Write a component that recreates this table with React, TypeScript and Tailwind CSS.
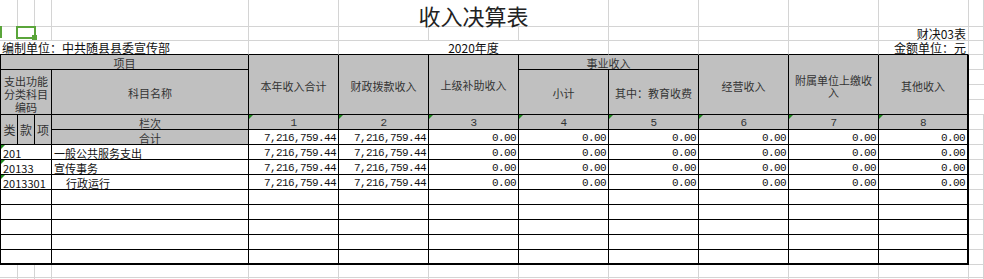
import React from "react";

// sheet column template: 类 | 款 | 项 | 科目名称 | 8 value columns | rest
const COLS = "grid grid-cols-[18px_17px_17px_197px_repeat(8,90px)_1fr]";

const OUT = "border-r border-b border-[#d4d4d4]";
const IN = "border-r border-b border-black";
const IN_LAST = "border-r-2 border-b border-black"; // right edge of the table
const HEAD = "bg-[#c0c0c0] text-[#333]";
const NUM = "font-['Liberation_Mono',monospace] text-[11px] tracking-[-0.6px]";

const values = [
  "7,216,759.44",
  "7,216,759.44",
  "0.00",
  "0.00",
  "0.00",
  "0.00",
  "0.00",
  "0.00",
];

const dataRows = [
  { code: "201", name: "一般公共服务支出", indent: false },
  { code: "20133", name: "宣传事务", indent: false },
  { code: "2013301", name: "行政运行", indent: true },
];

const Mark = () => (
  <span className="absolute left-0 top-0 h-0 w-0 border-t-4 border-r-4 border-t-[#1f8a1f] border-r-transparent" />
);

const Cell = ({
  className = "",
  children,
}: {
  className?: string;
  children?: React.ReactNode;
}) => <div className={`relative flex min-w-0 ${className}`}>{children}</div>;

const ValueCells = ({ empty, last }: { empty?: boolean; last?: boolean }) => (
  <>
    {values.map((v, i) => (
      <Cell
        key={i}
        className={`${i === 7 ? IN_LAST : IN} ${last ? "border-b-2" : ""} items-end justify-end pr-[2px] ${NUM} leading-[11px] text-[#111]`}
      >
        {empty ? null : v}
      </Cell>
    ))}
  </>
);

const App = () => {
  return (
    <div className="h-[279px] w-[984px] overflow-hidden bg-white font-['Noto_Sans_CJK_SC',sans-serif] text-[11px] text-[#111]">
      {/* sheet title area */}
      <div className={`${COLS} grid-rows-[27px_14px_14px]`}>
        <Cell className={OUT} />
        <Cell className={OUT} />
        <Cell className={OUT} />
        <Cell className={OUT} />
        <Cell className={OUT} />
        <Cell className={`${OUT} col-span-3 items-end justify-center text-[22px] leading-[22px] text-[#222]`}>
          收入决算表
        </Cell>
        <Cell className={OUT} />
        <Cell className={OUT} />
        <Cell className={OUT} />
        <Cell className={OUT} />
        <Cell className={OUT} />

        <Cell className={OUT}>
          <span className="absolute left-0 top-[-1px] h-[12px] w-[2px] bg-[#5aa53a]" />
        </Cell>
        <Cell className={OUT}>
          <span className="absolute left-[-2px] top-[-1px] z-10 h-[13px] w-[20px] border-2 border-[#5aa53a]" />
          <span className="absolute left-[14px] top-[8px] z-10 h-[5px] w-[5px] bg-[#5aa53a]" />
        </Cell>
        <Cell className={OUT} />
        <Cell className={OUT} />
        <Cell className={OUT} />
        <Cell className={OUT} />
        <Cell className={OUT} />
        <Cell className={OUT} />
        <Cell className={OUT} />
        <Cell className={OUT} />
        <Cell className={OUT} />
        <Cell className={`${OUT} items-end justify-end whitespace-nowrap pr-[2px] text-[12px] leading-[12px]`}>
          财决03表
        </Cell>
        <Cell className={OUT} />

        <Cell className="col-span-4 items-end whitespace-nowrap border-r border-b border-r-[#d4d4d4] border-b-black pl-[2px] text-[12px] leading-[12px]">
          编制单位：中共随县县委宣传部
        </Cell>
        <Cell className="border-r border-b border-r-[#d4d4d4] border-b-black" />
        <Cell className="col-span-3 items-end justify-center whitespace-nowrap border-r border-b border-r-[#d4d4d4] border-b-black text-[12px] leading-[12px]">
          2020年度
        </Cell>
        <Cell className="border-r border-b border-r-[#d4d4d4] border-b-black" />
        <Cell className="border-r border-b border-r-[#d4d4d4] border-b-black" />
        <Cell className="border-r border-b border-r-[#d4d4d4] border-b-black" />
        <Cell className="items-end justify-end whitespace-nowrap border-r border-b border-r-[#d4d4d4] border-b-black pr-[2px] text-[12px] leading-[12px]">
          金额单位：元
        </Cell>
        <Cell className={OUT} />
      </div>

      {/* table header */}
      <div className={`${COLS} grid-rows-[15px_45px_15px_15px]`}>
        <Cell className={`${IN} ${HEAD} col-span-4 items-end justify-center border-l leading-[12px]`}>项目</Cell>
        <Cell className={`${IN} ${HEAD} row-span-2 items-center justify-center pt-1`}>本年收入合计</Cell>
        <Cell className={`${IN} ${HEAD} row-span-2 items-center justify-center pt-1`}>财政拨款收入</Cell>
        <Cell className={`${IN} ${HEAD} row-span-2 items-center justify-center pt-[2px]`}>上级补助收入</Cell>
        <Cell className={`${IN} ${HEAD} col-span-2 items-end justify-center leading-[12px]`}>事业收入</Cell>
        <Cell className={`${IN} ${HEAD} row-span-2 items-center justify-center pt-1`}>经营收入</Cell>
        <Cell className={`${IN} ${HEAD} row-span-2 items-center justify-center px-px pt-[3px] text-center leading-[12px]`}>
          附属单位上缴收入
        </Cell>
        <Cell className={`${IN_LAST} ${HEAD} row-span-2 items-center justify-center pt-1`}>其他收入</Cell>
        <Cell className={OUT} />

        <Cell className={`${IN} ${HEAD} col-span-3 items-end justify-center border-l text-center leading-[13px]`}>
          支出功能分类科目编码
        </Cell>
        <Cell className={`${IN} ${HEAD} items-center justify-center pt-[3px]`}>科目名称</Cell>
        <Cell className={`${IN} ${HEAD} items-center justify-center pt-[3px]`}>小计</Cell>
        <Cell className={`${IN} ${HEAD} items-center justify-center whitespace-nowrap pt-[3px]`}>其中：教育收费</Cell>
        <Cell className="flex-col">
          <div className="h-[15px] border-b border-[#d4d4d4]" />
          <div className="h-[15px] border-b border-[#d4d4d4]" />
          <div className="h-[15px] border-b border-[#d4d4d4]" />
        </Cell>

        <Cell className={`${IN} ${HEAD} row-span-2 items-center justify-center border-l pl-px text-[12px]`}>类</Cell>
        <Cell className={`${IN} ${HEAD} row-span-2 items-center justify-center text-[12px]`}>款</Cell>
        <Cell className={`${IN} ${HEAD} row-span-2 items-center justify-center text-[12px]`}>项</Cell>
        <Cell className={`${IN} ${HEAD} items-end justify-center leading-[12px]`}>栏次</Cell>
        {[1, 2, 3, 4, 5, 6, 7, 8].map((n) => (
          <Cell
            key={n}
            className={`${n === 8 ? IN_LAST : IN} ${HEAD} items-end justify-center ${NUM} leading-[11px]`}
          >
            <Mark />
            {n}
          </Cell>
        ))}
        <Cell className={OUT} />

        <Cell className={`${IN} ${HEAD} items-end justify-center leading-[12px]`}>合计</Cell>
        <ValueCells />
        <Cell className={OUT} />
      </div>

      {/* data rows */}
      {dataRows.map((r) => (
        <div key={r.code} className={`${COLS} h-[15px]`}>
          <Cell className={`${IN} col-span-3 items-end border-l pl-[2px] leading-[12px]`}>
            <Mark />
            {r.code}
          </Cell>
          <Cell className={`${IN} items-end whitespace-nowrap leading-[12px] ${r.indent ? "pl-[14px]" : "pl-[2px]"}`}>
            {r.name}
          </Cell>
          <ValueCells />
          <Cell className={OUT} />
        </div>
      ))}
      {[0, 1, 2, 3, 4].map((i) => (
        <div key={i} className={`${COLS} h-[15px]`}>
          <Cell className={`${IN} col-span-3 border-l ${i === 4 ? "border-b-2" : ""}`} />
          <Cell className={`${IN} ${i === 4 ? "border-b-2" : ""}`} />
          <ValueCells empty last={i === 4} />
          <Cell className={OUT} />
        </div>
      ))}

      {/* empty sheet below the table */}
      <div className={`${COLS} h-[13px]`}>
        {Array.from({ length: 13 }).map((_, i) => (
          <Cell key={i} className={OUT} />
        ))}
      </div>
      <div className={`${COLS} h-[10px]`}>
        {Array.from({ length: 13 }).map((_, i) => (
          <Cell key={i} className="border-r border-[#d4d4d4]" />
        ))}
      </div>
    </div>
  );
};

export default App;
